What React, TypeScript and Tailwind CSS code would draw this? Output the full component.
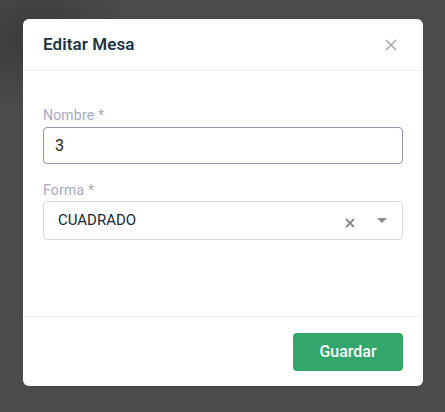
import React from "react";

export default function App() {
  return (
    <div
      className="w-[445px] h-[412px] overflow-hidden bg-[#4b4b4d] bg-[radial-gradient(ellipse_90px_70px_at_40px_40px,#39393b_0%,#4b4b4d_100%)] pt-[19px] pl-[23px]"
      style={{ fontFamily: "Roboto, 'Liberation Sans', sans-serif" }}
    >
      <div className="relative w-[400px] h-[367px] bg-white rounded-[6px] flex flex-col">
        <div className="h-[52px] flex items-center justify-between px-[20px] border-b border-[#eeeef0]">
          <h2 className="text-[17px] font-semibold text-[#1c3445] tracking-[0.1px]">Editar Mesa</h2>
          <svg width="12" height="12" viewBox="0 0 12 12" className="mr-[6px]">
            <path d="M1 1 L11 11 M11 1 L1 11" stroke="#a3a3a8" strokeWidth="1.4" />
          </svg>
        </div>
        <div className="flex-1 px-[20px] pt-[34px] border-b border-[#eeeef0]">
          <label className="block text-[14px] leading-[20px] text-[#a6a9c4] tracking-[0.2px]">Nombre *</label>
          <div className="mt-[2px] h-[37px] rounded-[4px] border border-[#9195b0] flex items-center px-[11px] text-[16px] text-[#222]">
            3
          </div>
          <label className="block mt-[16px] text-[14px] leading-[20px] text-[#a6a9c4] tracking-[0.2px]">Forma *</label>
          <div className="mt-[1px] h-[39px] rounded-[4px] border border-[#d9d9dd] flex items-center pl-[14px] pr-[14px] text-[15px] text-[#1c2733]">
            <span className="flex-1">CUADRADO</span>
            <svg width="10" height="10" viewBox="0 0 10 10" className="mt-[5px] mr-[22px]">
              <path d="M1 1 L9 9 M9 1 L1 9" stroke="#8a8a8e" strokeWidth="1.8" />
            </svg>
            <svg width="10" height="6" viewBox="0 0 10 6" className="mr-[1px]">
              <path d="M0 0 L10 0 L5 5 Z" fill="#8a8a8e" />
            </svg>
          </div>
        </div>
        <div className="h-[69px] flex items-center justify-end px-[20px]">
          <button className="w-[110px] h-[38px] rounded-[4px] bg-[#33a66b] text-white text-[16px] font-medium">
            Guardar
          </button>
        </div>
      </div>
    </div>
  );
}
